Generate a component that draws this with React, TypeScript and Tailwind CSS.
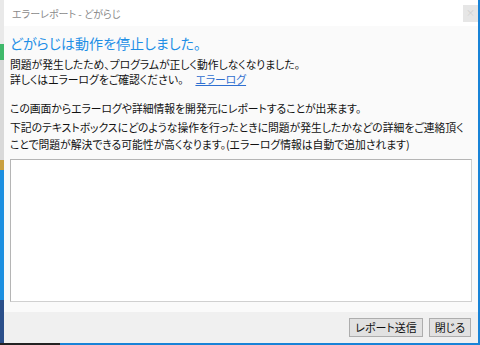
const jp = { fontFamily: '"Noto Sans CJK JP", "Noto Sans", sans-serif', fontFeatureSettings: '"palt"' };

const DesktopEdge = () => (
  <div className="w-[4px] flex flex-col shrink-0">
    <div className="h-[44px] bg-[#e9e9e9]" />
    <div className="h-[16px] bg-[#3fb86a]" />
    <div className="h-[100px] bg-[#d9d9d9]" />
    <div className="h-[10px] bg-[#c9a040]" />
    <div className="h-[130px] bg-[#1d8fe0]" />
    <div className="flex-1 bg-[#2b4f8a]" />
  </div>
);

const FooterButton = ({ label, width }: { label: string; width: string }) => (
  <button
    className={`${width} h-[19px] bg-[#e1e1e1] border border-[#adadad] text-[11px] leading-none text-[#111] flex items-center justify-center`}
  >
    {label}
  </button>
);

export default function App() {
  return (
    <div className="w-[480px] h-[345px] flex flex-col bg-white overflow-hidden" style={jp}>
      <div className="flex flex-1 min-h-0">
        <DesktopEdge />
        <div className="flex-1 flex flex-col border-r-2 border-[#1883d7]">
          {/* title bar */}
          <div className="h-[26px] bg-white flex items-center justify-between pl-[8px]">
            <span className="text-[10px] text-[#8a8a8a]">エラーレポート - どがらじ</span>
            <div className="w-[15px] h-[17px] bg-[#e6e6e6] flex items-center justify-center text-[9px] text-[#cfcfcf]">
              ×
            </div>
          </div>

          {/* body */}
          <div className="flex-1 flex flex-col bg-[#fafafa] px-[6px]">
            <h1 className="mt-[7px] text-[14px] leading-[20px] text-[#1e8fe6]">
              どがらじは動作を停止しました。
            </h1>
            <div className="mt-[4px] text-[10.8px] leading-[15px] text-[#111]">
              <p>問題が発生したため、プログラムが正しく動作しなくなりました。</p>
              <p className="flex">
                <span>詳しくはエラーログをご確認ください。</span>
                <a className="ml-[12px] text-[#2f6fd0] underline">エラーログ</a>
              </p>
            </div>
            <p className="mt-[14px] text-[10.8px] leading-[15px] text-[#111]">
              この画面からエラーログや詳細情報を開発元にレポートすることが出来ます。
            </p>
            <p className="mt-[3px] text-[10.8px] leading-[17px] text-[#111]">
              下記のテキストボックスにどのような操作を行ったときに問題が発生したかなどの詳細をご連絡頂くことで問題が解決できる可能性が高くなります。(エラーログ情報は自動で追加されます)
            </p>
            <textarea className="mt-[6px] h-[143px] w-full bg-white border border-[#b5b5b5] border-b-[#d0d0d0] border-r-[#d0d0d0] resize-none outline-none" />
            <div className="flex-1" />
          </div>

          {/* footer */}
          <div className="h-[31px] bg-[#f0f0f0] flex items-center justify-end gap-[6px] pr-[7px] pb-[1px]">
            <FooterButton label="レポート送信" width="w-[74px]" />
            <FooterButton label="閉じる" width="w-[42px]" />
          </div>
        </div>
      </div>
      <div className="h-[2px] flex">
        <div className="w-[60px] bg-[#222]" />
        <div className="flex-1 bg-[#1883d7]" />
      </div>
    </div>
  );
}
